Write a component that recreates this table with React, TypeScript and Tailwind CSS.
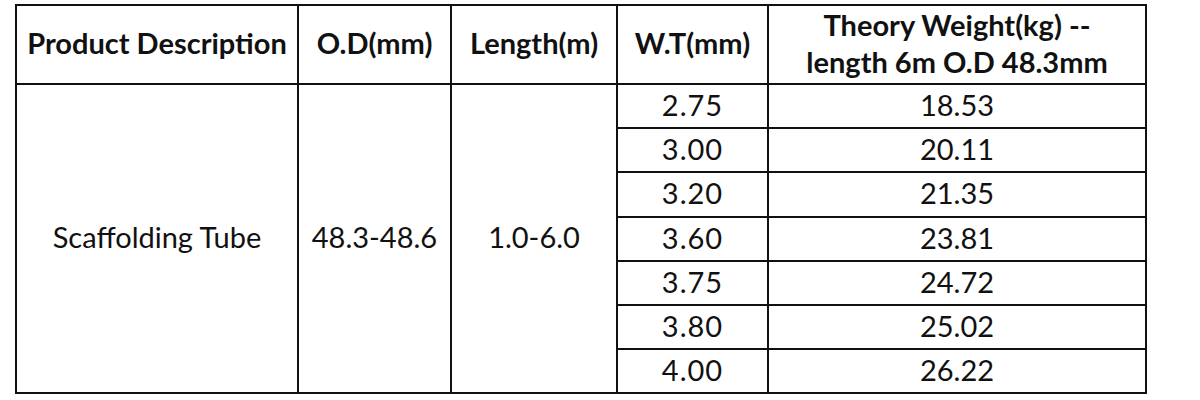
import React from 'react';

interface WeightRow {
  wt: string;
  weight: string;
}

const rows: WeightRow[] = [
  { wt: '2.75', weight: '18.53' },
  { wt: '3.00', weight: '20.11' },
  { wt: '3.20', weight: '21.35' },
  { wt: '3.60', weight: '23.81' },
  { wt: '3.75', weight: '24.72' },
  { wt: '3.80', weight: '25.02' },
  { wt: '4.00', weight: '26.22' },
];

const cell = 'border-2 border-[#111] text-center align-middle px-0 pt-0 pb-[3px]';

const App: React.FC = () => {
  return (
    <div className="w-[1200px] h-[400px] bg-white pt-[4px] pl-[15px] font-['Lato',sans-serif] text-[#111]">
      <table className="w-[1130px] table-fixed border-collapse">
        <colgroup>
          <col className="w-[282px]" />
          <col className="w-[153px]" />
          <col className="w-[166px]" />
          <col className="w-[151px]" />
          <col className="w-[378px]" />
        </colgroup>
        <thead>
          <tr className="h-[78px] text-[29px] font-bold">
            <th className={cell}>Product Description</th>
            <th className={cell}>O.D(mm)</th>
            <th className={cell}>Length(m)</th>
            <th className={cell}>W.T(mm)</th>
            <th className={`${cell} leading-[37px]`}>
              Theory Weight(kg) --
              <br />
              length 6m O.D 48.3mm
            </th>
          </tr>
        </thead>
        <tbody className="text-[29px] leading-[34px]">
          {rows.map((row, i) => (
            <tr key={row.wt} className={i === 2 ? 'h-[45px]' : 'h-[44px]'}>
              {i === 0 && (
                <>
                  <td rowSpan={7} className={cell}>Scaffolding Tube</td>
                  <td rowSpan={7} className={cell}>48.3-48.6</td>
                  <td rowSpan={7} className={cell}>1.0-6.0</td>
                </>
              )}
              <td className={`${cell} tracking-[1px]`}>{row.wt}</td>
              <td className={cell}>{row.weight}</td>
            </tr>
          ))}
        </tbody>
      </table>
    </div>
  );
};

export default App;
